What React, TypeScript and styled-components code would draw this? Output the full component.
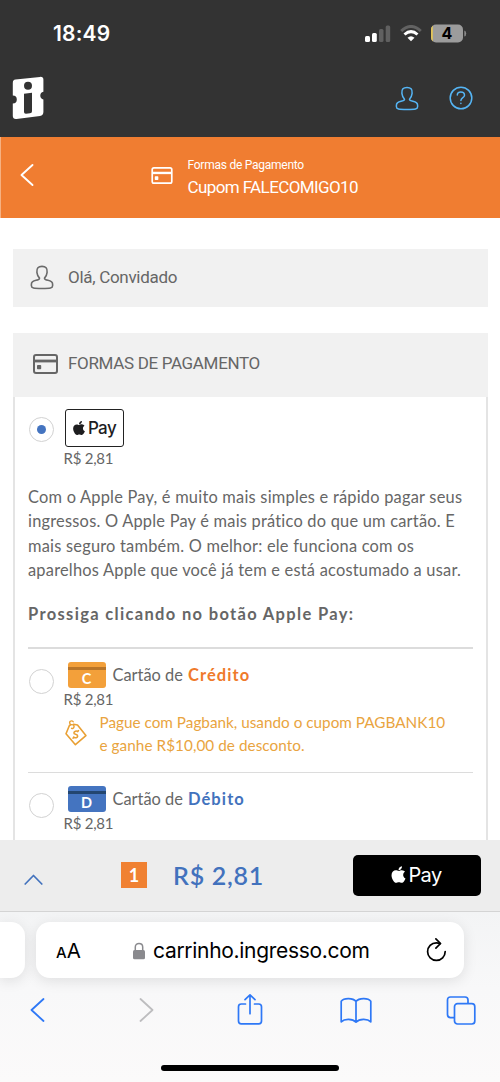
import React from "react";
import styled, { createGlobalStyle } from "styled-components";
import { FaApple } from "react-icons/fa";

const Global = createGlobalStyle`
  *, *::before, *::after { box-sizing: border-box; }
  body { margin: 0; background: #fff; }
  svg { display: block; flex: none; }
`;

const ui = `Inter, "Liberation Sans", sans-serif`;
const body = `Lato, "Open Sans", sans-serif`;
const title = `Roboto, "Liberation Sans", sans-serif`;

const Screen = styled.div`
  width: 500px;
  height: 1082px;
  display: flex;
  flex-direction: column;
  overflow: hidden;
  background: #fff;
`;

/* One line of text; size, tracking and colour differ from use to use. */
const Text = styled.span<{
  $size: number;
  $line: number;
  $track?: number;
  $color?: string;
  $weight?: number;
  $font?: string;
}>`
  display: block;
  white-space: nowrap;
  font-family: ${(p) => p.$font ?? body};
  font-size: ${(p) => p.$size}px;
  line-height: ${(p) => p.$line}px;
  letter-spacing: ${(p) => p.$track ?? 0}px;
  font-weight: ${(p) => p.$weight ?? 400};
  color: ${(p) => p.$color ?? "#666"};
`;

const Header = styled.header`
  height: 137px;
  flex: none;
  background: #333;
`;

const StatusBar = styled.div`
  height: 67px;
  padding: 0 33px 0 53px;
  display: flex;
  align-items: center;
  justify-content: space-between;
`;

const StatusIcons = styled.div`
  display: flex;
  align-items: center;
  gap: 9px;
`;

const Brand = styled.div`
  height: 62px;
  padding: 0 27px 0 12px;
  display: flex;
  align-items: center;
  justify-content: space-between;
`;

const Actions = styled.div`
  display: flex;
  align-items: center;
  gap: 30.5px;
`;

const Coupon = styled.div`
  height: 81px;
  flex: none;
  display: flex;
  padding-left: 18px;
  background: #f07d31;
  border-left: 1px solid #f6b182;
`;

const CouponBack = styled.div`
  width: 132px;
  padding-top: 26px;
`;

const CouponIcon = styled.div`
  width: 36.5px;
  padding-top: 30px;
`;

const CouponText = styled.div`
  padding-top: 18px;
`;

const Content = styled.main`
  height: 622px;
  flex: none;
  overflow: hidden;
  padding: 31px 12px 0 13px;
`;

const Greeting = styled.section`
  height: 58px;
  padding: 0 0 3px 17px;
  display: flex;
  align-items: center;
  background: #f1f1f1;
`;

const HeadIcon = styled.div<{ $inset?: number }>`
  width: 38px;
  padding: 1px 0 0 ${(p) => p.$inset ?? 0}px;
`;

const Panel = styled.section`
  margin-top: 26px;
`;

const PanelHead = styled.div`
  height: 64px;
  padding: 0 0 4px 17px;
  display: flex;
  align-items: center;
  background: #f1f1f1;
`;

const PanelBody = styled.div`
  height: 500px;
  padding: 12px 13px 0 13px;
  border: solid #e4e4e4;
  border-width: 0 2px;
`;

const Option = styled.div<{ $height: number }>`
  height: ${(p) => p.$height}px;
  display: flex;
`;

const RadioCol = styled.div<{ $top: number }>`
  width: 35.5px;
  padding: ${(p) => p.$top}px 0 0 1px;
`;

const Radio = styled.div`
  width: 25px;
  height: 25px;
  display: grid;
  place-items: center;
  border: 1px solid #d2d2d2;
  border-radius: 50%;
  background: #fff;
`;

const Dot = styled.div`
  width: 9px;
  height: 9px;
  border-radius: 50%;
  background: #4474c0;
`;

const OptionBody = styled.div<{ $top?: number }>`
  flex: 1;
  padding-top: ${(p) => p.$top ?? 0}px;
`;

const PayMark = styled.div`
  width: 59px;
  height: 38px;
  margin-left: 1.5px;
  padding: 0 2px 1px 0;
  display: flex;
  align-items: center;
  justify-content: center;
  gap: 1px;
  border: 1px solid #222;
  border-radius: 3px;
  color: #1d1d1f;
`;

const Copy = styled.div`
  padding-top: 7px;
  height: 121px;
`;

const Divider = styled.hr`
  margin: 0;
  height: 1.5px;
  border: 0;
  background: #dcdcdc;
`;

const CardLine = styled.div`
  display: flex;
  align-items: center;
  gap: 7px;
  padding-left: 4px;
  height: 26px;
`;

const CardBadge = styled.div<{ $base: string; $stripe: string }>`
  width: 38px;
  height: 26px;
  display: flex;
  flex-direction: column;
  align-items: center;
  border-radius: 3px;
  overflow: hidden;
  background: ${(p) => p.$base};
  &::before {
    content: "";
    width: 100%;
    height: 3px;
    margin: 5px 0 1px;
    flex: none;
    background: ${(p) => p.$stripe};
  }
`;

const CardLabel = styled.div`
  display: flex;
  gap: 5px;
`;

const Promo = styled.div`
  display: flex;
  padding: 1px 0 0 1px;
`;

const PromoIcon = styled.div`
  width: 35px;
  padding-top: 9px;
`;

const Summary = styled.footer`
  height: 72px;
  flex: none;
  display: flex;
  align-items: center;
  padding: 0 19px 1px 24px;
  background: #ededed;
  border-bottom: 1px solid #d4d4d4;
`;

const Toggle = styled.div`
  width: 97px;
  padding-top: 8px;
`;

const Count = styled.div`
  width: 26px;
  height: 26px;
  display: grid;
  place-items: center;
  background: #f08132;
`;

const Total = styled.div`
  flex: 1;
  padding-left: 26px;
`;

const PayButton = styled.button`
  width: 128px;
  height: 41px;
  padding: 0 3px 1px 0;
  display: flex;
  align-items: center;
  justify-content: center;
  border: 0;
  border-radius: 5px;
  background: #000;
  color: #fff;
`;

const Browser = styled.nav`
  height: 170px;
  flex: none;
  overflow: hidden;
  background: linear-gradient(#f3f4f5, #f8f8f9 45%, #fbfafa);
`;

const AddressRow = styled.div`
  display: flex;
  gap: 11px;
  padding-top: 10px;
`;

const NeighbourTab = styled.div`
  width: 25px;
  height: 56px;
  border-radius: 0 14px 14px 0;
  background: #fff;
  box-shadow: 0 3px 14px rgba(0, 0, 0, 0.1);
`;

const Address = styled.div`
  width: 428px;
  height: 56px;
  padding: 1px 17.5px 0 20px;
  display: flex;
  align-items: center;
  border-radius: 14px;
  background: #fff;
  box-shadow: 0 3px 14px rgba(0, 0, 0, 0.1);
`;

const Reader = styled.div`
  width: 77px;
  padding-top: 2px;
  display: flex;
  align-items: baseline;
`;

const Url = styled.div`
  flex: 1;
  display: flex;
  align-items: center;
  gap: 8px;
`;

const Toolbar = styled.div`
  height: 64px;
  padding-left: 29.5px;
  display: grid;
  grid-template-columns: 109px 98.5px 102.5px 106.5px 30px;
  align-items: center;
`;

const HomeIndicator = styled.div`
  width: 178px;
  height: 6px;
  margin: 23px auto 0;
  border-radius: 3px;
  background: #000;
`;

const Person = ({ color, w }: { color: string; w: number }) => (
  <svg width="24" height="25" viewBox="0 0 24 25" fill="none" stroke={color} strokeWidth={w} strokeLinejoin="round">
    <path d="M9.500 13.200C7.800 11.600 7.200 9.800 6.900 7.300 6.500 3.200 8.300 1.400 12 1.400S17.500 3.200 17.100 7.300C16.800 9.800 16.200 11.600 14.500 13.200 14.500 14.400 15.300 14.800 18 15.200 21.600 15.800 22.600 16.800 22.600 19.300V20.800C22.600 23.200 20.500 23.500 12 23.500S1.400 23.200 1.400 20.800V19.300C1.400 16.800 2.400 15.800 6 15.200 8.700 14.800 9.500 14.400 9.500 13.200Z" />
  </svg>
);

const CardIcon = ({ color, width, height }: { color: string; width: number; height: number }) => (
  <svg width={width} height={height} viewBox="0 0 25 20" fill="none">
    <rect x="1" y="1" width="23" height="18" rx="2" stroke={color} strokeWidth="2" />
    <path d="M1 7H24" stroke={color} strokeWidth="2.800" />
    <rect x="4" y="11" width="4.200" height="4.200" rx=".8" fill={color} />
  </svg>
);

const TicketLogo = () => (
  <svg width="32" height="44" viewBox="0 0 32 44">
    <path
      fill="#fff"
      d="M3.500 3.600 28 .9Q31.300.6 31.400 3.500V15.700A4 4 0 0 0 31.400 23.500V36Q31.300 39.500 28 40L4.500 43Q.9 43.400.8 40V27.500A4 4 0 0 0 .8 19.500V7Q.8 4 3.500 3.600Z"
    />
    <circle cx="16" cy="9.800" r="4" fill="#333" />
    <path fill="#333" d="M12 17.700 20 16.700V35.200Q20 37 18 37.200L14 37.700Q12 37.800 12 36Z" />
  </svg>
);

const Signal = () => (
  <svg width="26" height="17" viewBox="0 0 26 17">
    <rect x="0" y="11" width="5" height="6" rx="1.500" fill="#fff" />
    <rect x="7" y="8" width="4.800" height="9" rx="1.500" fill="#fff" />
    <rect x="14" y="4" width="4.500" height="13" rx="1.500" fill="#606060" />
    <rect x="20.700" y=".5" width="4.500" height="16.500" rx="1.500" fill="#606060" />
  </svg>
);

const Wifi = () => (
  <svg width="22" height="17" viewBox="0 0 22 17" fill="none">
    <path d="M1.200 6Q11-3 20.800 6" stroke="#626262" strokeWidth="3" />
    <path d="M4.500 9.500Q11 3.700 17.500 9.500" stroke="#fff" strokeWidth="3" />
    <path d="M7.500 12.800Q11 9.600 14.500 12.800L11 16.300Z" fill="#fff" />
  </svg>
);

const Battery = () => (
  <svg width="36" height="19" viewBox="0 0 36 19">
    <defs>
      <clipPath id="cell">
        <rect x="0" y=".5" width="32" height="18" rx="5" />
      </clipPath>
    </defs>
    <g clipPath="url(#cell)">
      <rect width="32" height="19" fill="#9c9c9c" />
      <rect width="1.800" height="19" fill="#e3c558" />
    </g>
    <path d="M33.300 6.500Q35.200 7 35.200 9.500T33.300 12.500Z" fill="#8c8c8c" />
    <text x="16" y="15.200" textAnchor="middle" fontFamily={ui} fontSize="16" fontWeight="700" fill="#000">
      4
    </text>
  </svg>
);

const Help = () => (
  <svg width="24" height="24" viewBox="0 0 24 24" fill="none" stroke="#55b5f5" strokeWidth="1.500" strokeLinecap="round">
    <circle cx="12" cy="12" r="10.800" />
    <path d="M8.300 9C8.300 6.900 9.900 6 11.800 6 13.900 6 15.500 7.200 15.500 9.200 15.500 11.700 11.900 11.700 11.900 14.500" />
    <path d="M11.900 17.200V17.600" />
  </svg>
);

const Chevron = ({ d, w, h, color, sw }: { d: string; w: number; h: number; color: string; sw: number }) => (
  <svg width={w} height={h} viewBox={`0 0 ${w} ${h}`} fill="none" stroke={color} strokeWidth={sw} strokeLinecap="round" strokeLinejoin="round">
    <path d={d} />
  </svg>
);

const Tag = () => (
  <svg width="22" height="26" viewBox="0 0 22 26" fill="none" stroke="#e9a034" strokeWidth="1.600" strokeLinejoin="round" strokeLinecap="round">
    <path d="M4.500 5.300 1 13.800 10.400 24.700 20.900 15.600 12.500 5 8.500 4.200" />
    <path d="M4.800 5.500C7.300 3.700 9.600 5.200 8.900 7.200 8.500 8.300 7.500 8.700 6.600 8.300M6.200 4.800C4.500 4 4.200 2.300 5.300 1.300 6.300.5 7.700.8 8.200 1.800" strokeWidth="1.400" />
    <path d="M12.800 11.600C11.300 10.600 9.200 11.300 8.900 12.800 8.500 14.900 12.900 13.700 12.700 16.200 12.500 17.800 10.300 18.400 8.800 17.100M8 18.200 8.800 17.100M12.800 11.600 13.500 10.600" strokeWidth="1.500" />
  </svg>
);

const Lock = () => (
  <svg width="12" height="18" viewBox="0 0 12 18" fill="none">
    <path d="M2.300 9V5C2.300.2 9.700.2 9.700 5V9" stroke="#8a8a8e" strokeWidth="1.500" />
    <rect x="0" y="8" width="12" height="9.300" rx="1.600" fill="#8a8a8e" />
  </svg>
);

const Reload = () => (
  <svg width="21" height="25" viewBox="0 0 21 25" fill="none" stroke="#000" strokeWidth="1.700" strokeLinecap="round" strokeLinejoin="round">
    <path d="M14.300 5.500C13 5 11.500 4.800 10.300 4.800A8.800 8.800 0 1 0 19.200 13.600" />
    <path d="M9.900.9 14.500 5.500 9.900 10.100" />
  </svg>
);

const Share = () => (
  <svg width="26" height="34" viewBox="0 0 26 34" fill="none" stroke="#2e78f6" strokeWidth="1.700" strokeLinecap="round" strokeLinejoin="round">
    <path d="M8.500 11H4.300Q1.500 11 1.500 13.800V28Q1.500 30.800 4.300 30.800H21.700Q24.500 30.800 24.500 28V13.800Q24.500 11 21.700 11H17.500" />
    <path d="M13 20.700V1.800M8 6.600 13 1.800 18 6.600" />
  </svg>
);

const Book = () => (
  <svg width="32" height="27" viewBox="0 0 32 27" fill="none" stroke="#2e78f6" strokeWidth="1.700" strokeLinejoin="round">
    <path d="M16 4.500C13 .8 4 .6 1.200 4.200V24.800C4.500 21.600 12.500 21.600 16 25.200 19.500 21.600 27.500 21.600 30.800 24.800V4.200C28 .6 19 .8 16 4.500ZM16 4.500V25.200" />
  </svg>
);

const Tabs = () => (
  <svg width="30" height="29" viewBox="0 0 30 29" fill="none" stroke="#2e78f6" strokeWidth="1.700">
    <path d="M8.500 21.600H4.500Q1.500 21.600 1.500 18.600V4Q1.500 1 4.500 1H19Q22 1 22 4V7.500" />
    <rect x="8.500" y="7.700" width="20.300" height="20.300" rx="3" />
  </svg>
);

const Price = () => (
  <Text $size={15} $line={22} $track={-0.25}>
    R$ 2,81
  </Text>
);

const copyLines = [
  "Com o Apple Pay, é muito mais simples e rápido pagar seus",
  "ingressos. O Apple Pay é mais prático do que um cartão. E",
  "mais seguro também. O melhor: ele funciona com os",
  "aparelhos Apple que você já tem e está acostumado a usar.",
];

type CardProps = { letter: string; kind: string; base: string; stripe: string; accent: string };

const CardHeading = ({ letter, kind, base, stripe, accent }: CardProps) => (
  <CardLine>
    <CardBadge $base={base} $stripe={stripe}>
      <Text $size={14.5} $line={16} $weight={700} $color="#fff">
        {letter}
      </Text>
    </CardBadge>
    <CardLabel>
      <Text $size={16.4} $line={24}>
        Cartão de
      </Text>
      <Text $size={16.5} $line={24} $weight={700} $track={1.1} $color={accent}>
        {kind}
      </Text>
    </CardLabel>
  </CardLine>
);

export default function App() {
  return (
    <Screen>
      <Global />
      <Header>
        <StatusBar>
          <Text $font={ui} $size={21} $line={24} $weight={600} $track={0.2} $color="#fff">
            18:49
          </Text>
          <StatusIcons>
            <Signal />
            <Wifi />
            <Battery />
          </StatusIcons>
        </StatusBar>
        <Brand>
          <TicketLogo />
          <Actions>
            <Person color="#55b5f5" w={1.5} />
            <Help />
          </Actions>
        </Brand>
      </Header>

      <Coupon>
        <CouponBack>
          <Chevron w={15} h={24} d="M13.500 2 2.500 12 13.500 22" color="#fff" sw={1.900} />
        </CouponBack>
        <CouponIcon>
          <CardIcon color="#fff" width={22} height={17} />
        </CouponIcon>
        <CouponText>
          <Text $font={title} $size={12} $line={20} $track={-0.25} $color="#fff">
            Formas de Pagamento
          </Text>
          <Text $font={title} $size={17} $line={24} $track={-0.6} $color="#fff">
            Cupom FALECOMIGO10
          </Text>
        </CouponText>
      </Coupon>

      <Content>
        <Greeting>
          <HeadIcon>
            <Person color="#6a6a6a" w={1.6} />
          </HeadIcon>
          <Text $font={title} $size={17} $line={24} $track={-0.3}>
            Olá, Convidado
          </Text>
        </Greeting>

        <Panel>
          <PanelHead>
            <HeadIcon $inset={3}>
              <CardIcon color="#666" width={25} height={20} />
            </HeadIcon>
            <Text $font={title} $size={17} $line={24} $track={-0.33}>
              FORMAS DE PAGAMENTO
            </Text>
          </PanelHead>
          <PanelBody>
            <Option $height={69}>
              <RadioCol $top={8}>
                <Radio>
                  <Dot />
                </Radio>
              </RadioCol>
              <OptionBody>
                <PayMark>
                  <FaApple size={16} />
                  <Text $font={ui} $size={17} $line={24} $weight={500} $track={-0.6} $color="#1d1d1f">
                    Pay
                  </Text>
                </PayMark>
                <Price />
              </OptionBody>
            </Option>
            <Copy>
              {copyLines.map((line) => (
                <Text key={line} $size={16.4} $line={24.3} $track={0.22}>
                  {line}
                </Text>
              ))}
            </Copy>
            <Option $height={48}>
              <Text $size={16.5} $line={31} $weight={700} $track={1.33}>
                Prossiga clicando no botão Apple Pay:
              </Text>
            </Option>
            <Divider />
            <Option $height={123}>
              <RadioCol $top={20}>
                <Radio />
              </RadioCol>
              <OptionBody $top={13}>
                <CardHeading letter="C" kind="Crédito" base="#f3a03a" stripe="#b97528" accent="#ef7a2b" />
                <Price />
                <Promo>
                  <PromoIcon>
                    <Tag />
                  </PromoIcon>
                  <div>
                    <Text $size={15.3} $line={23.3} $color="#e9a440">
                      Pague com Pagbank, usando o cupom PAGBANK10
                    </Text>
                    <Text $size={15.3} $line={23.3} $track={0.05} $color="#e9a440">
                      e ganhe R$10,00 de desconto.
                    </Text>
                  </div>
                </Promo>
              </OptionBody>
            </Option>
            <Divider />
            <Option $height={100}>
              <RadioCol $top={20}>
                <Radio />
              </RadioCol>
              <OptionBody $top={13}>
                <CardHeading letter="D" kind="Débito" base="#4474c0" stripe="#234670" accent="#4272bd" />
                <Price />
              </OptionBody>
            </Option>
          </PanelBody>
        </Panel>
      </Content>

      <Summary>
        <Toggle>
          <Chevron w={19} h={11} d="M1.200 10 9.500 1.500 17.800 10" color="#4272bd" sw={1.700} />
        </Toggle>
        <Count>
          <Text $size={18} $line={24} $weight={700} $color="#fff">
            1
          </Text>
        </Count>
        <Total>
          <Text $size={25} $line={30} $weight={600} $track={0.75} $color="#4272bd">
            R$ 2,81
          </Text>
        </Total>
        <PayButton>
          <FaApple size={19} />
          <Text $font={ui} $size={20} $line={24} $track={-0.6} $color="#fff">
            Pay
          </Text>
        </PayButton>
      </Summary>

      <Browser>
        <AddressRow>
          <NeighbourTab />
          <Address>
            <Reader>
              <Text $font={ui} $size={15} $line={24} $color="#000" $weight={500}>
                A
              </Text>
              <Text $font={ui} $size={20.5} $line={24} $color="#000">
                A
              </Text>
            </Reader>
            <Url>
              <Lock />
              <Text $font={ui} $size={21} $line={28} $track={-0.3} $color="#000">
                carrinho.ingresso.com
              </Text>
            </Url>
            <Reload />
          </Address>
        </AddressRow>
        <Toolbar>
          <Chevron w={15} h={24} d="M13.500 1 1.500 12 13.500 23" color="#2e78f6" sw={1.800} />
          <Chevron w={15} h={24} d="M1.500 1 13.500 12 1.500 23" color="#bdbdbf" sw={1.800} />
          <Share />
          <Book />
          <Tabs />
        </Toolbar>
        <HomeIndicator />
      </Browser>
    </Screen>
  );
}
